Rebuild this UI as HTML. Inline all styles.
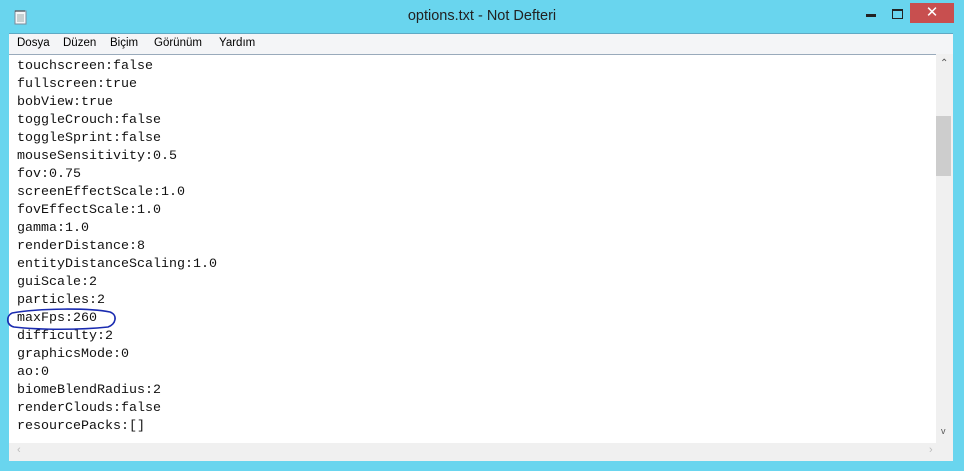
<!DOCTYPE html>
<html><head><style>
body{margin:0;width:964px;height:471px;background:#69d5ee;position:relative;overflow:hidden;font-family:"Liberation Sans",sans-serif}
.title{position:absolute;left:0;top:0;width:964px;height:33px;text-align:center;line-height:33px;font-size:14.5px;color:#222}
.menu{position:absolute;left:9px;top:33px;width:944px;height:20px;background:#f4f5f7;font-size:11.5px;color:#000;border-top:1px solid #5fa9c4}
.menu span{position:absolute;top:3px}
.edit{position:absolute;left:9px;top:54px;width:927px;height:389px;background:#fff;border-top:1px solid #9ab}
.edit pre{margin:0;position:absolute;left:8px;top:3px;font-family:"Liberation Mono",monospace;font-size:13.33px;line-height:18px;color:#111}
.vs{position:absolute;left:936px;top:54px;width:17px;height:389px;background:#f0f0f0}
.thumb{position:absolute;left:0px;top:62px;width:15px;height:60px;background:#cdcdcd}
.hs{position:absolute;left:9px;top:443px;width:944px;height:18px;background:#f0f0f0}
.close{position:absolute;left:910px;top:3px;width:44px;height:20px;background:#c84f4f;color:#fff;text-align:center;font-size:15px;line-height:20px}
</style></head><body>
<div class="title">options.txt - Not Defteri</div>
<svg style="position:absolute;left:14px;top:9px" width="14" height="16"><rect x="1" y="2" width="11" height="13" fill="#f4f6f8" stroke="#7a8a9a"/><path d="M3 6h7M3 8h7M3 10h7M3 12h7" stroke="#9aa"/><path d="M2 1v2M4 1v2M6 1v2M8 1v2M10 1v2" stroke="#555"/></svg>
<div style="position:absolute;left:866px;top:14px;width:10px;height:3px;background:#222"></div>
<div style="position:absolute;left:892px;top:9px;width:9px;height:7px;border:1px solid #222;border-top-width:2px"></div>
<div class="close">✕</div>
<div class="menu"><span style="left:8px">Dosya</span><span style="left:54px">Düzen</span><span style="left:101px">Biçim</span><span style="left:145px">Görünüm</span><span style="left:210px">Yardım</span></div>
<div class="edit"><pre>touchscreen:false
fullscreen:true
bobView:true
toggleCrouch:false
toggleSprint:false
mouseSensitivity:0.5
fov:0.75
screenEffectScale:1.0
fovEffectScale:1.0
gamma:1.0
renderDistance:8
entityDistanceScaling:1.0
guiScale:2
particles:2
maxFps:260
difficulty:2
graphicsMode:0
ao:0
biomeBlendRadius:2
renderClouds:false
resourcePacks:[]</pre></div>
<svg style="position:absolute;left:0;top:300px" width="130" height="40"><path d="M12 13 C40 8 90 8 110 12 C118 15 116 24 108 27 C80 30 40 30 14 27 C6 25 6 16 12 13" fill="none" stroke="#1a2bb0" stroke-width="1.6"/></svg>
<div class="vs"><div class="thumb"></div><div style="position:absolute;left:4px;top:4px;font-size:10px;color:#555">⌃</div><div style="position:absolute;left:5px;top:372px;font-size:9px;color:#555">v</div></div>
<div class="hs"><div style="position:absolute;left:8px;top:1px;font-size:11px;color:#bbb">‹</div><div style="position:absolute;left:920px;top:1px;font-size:11px;color:#bbb">›</div></div>
</body></html>
